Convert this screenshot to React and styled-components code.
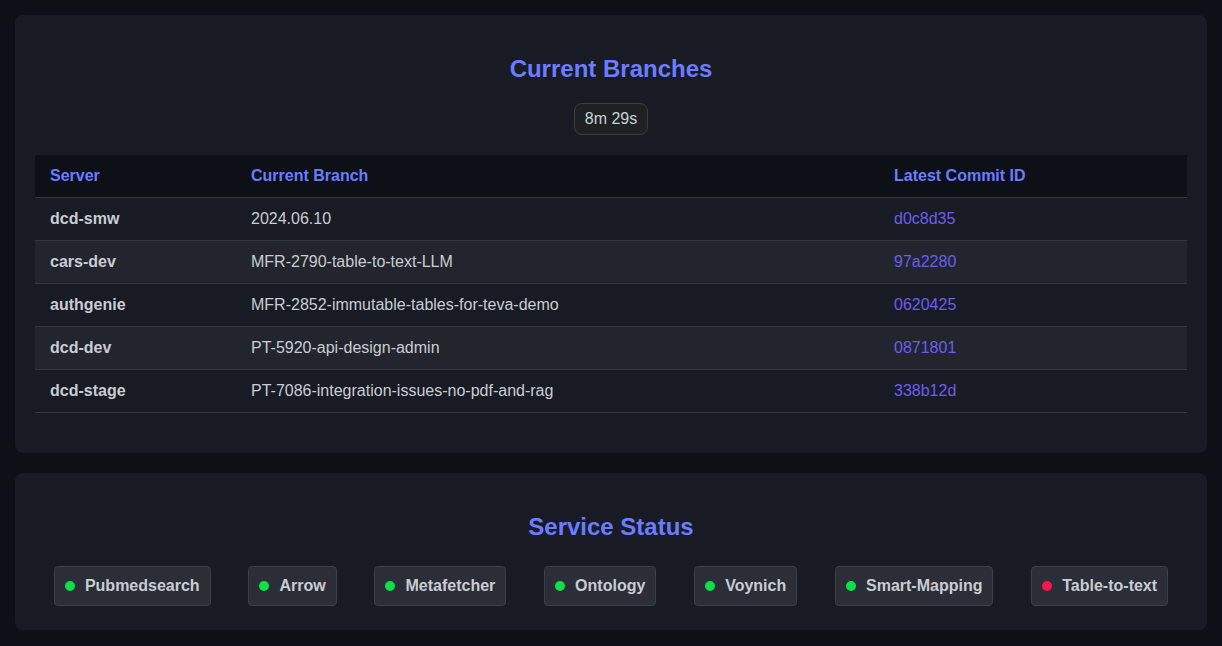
import styled, { createGlobalStyle } from 'styled-components';

const GlobalStyle = createGlobalStyle`
  body {
    margin: 0;
    background: #0d1017;
    font-family: 'Liberation Sans', Arial, sans-serif;
    color: #c9d1d9;
  }
`;

const Page = styled.div`
  padding: 15px;
  display: flex;
  flex-direction: column;
  gap: 20px;
`;

const Card = styled.section`
  background: #181b23;
  border-radius: 8px;
  padding: ${(p) => p.$pad || '20px'};
`;

const Title = styled.h2`
  margin: 20px 0 0;
  text-align: center;
  font-size: 24px;
  line-height: 28px;
  font-weight: 700;
  color: #6b7cff;
`;

const TimerRow = styled.div`
  display: flex;
  justify-content: center;
  margin: 20px 0 20px;
`;

const Timer = styled.span`
  display: inline-block;
  padding: 6px 10px;
  font-size: 16px;
  line-height: 18px;
  color: #c9d1d9;
  background: #1f2024;
  border: 1px solid #3b3c40;
  border-radius: 8px;
`;

const Table = styled.table`
  width: 100%;
  border-collapse: collapse;
  font-size: 16px;
  margin-bottom: 20px;
`;

const Th = styled.th`
  text-align: left;
  padding: 0 15px;
  height: 42px;
  background: #0d1017;
  color: #6b7cff;
  font-weight: 700;
  border-bottom: 1px solid #33363e;
  width: ${(p) => p.$w || 'auto'};
`;

const Tr = styled.tr`
  background: ${(p) => (p.$odd ? '#22252d' : 'transparent')};
`;

const Td = styled.td`
  padding: 0 15px;
  height: 42px;
  border-bottom: 1px solid #33363e;
  color: ${(p) => (p.$commit ? '#6c5cf2' : '#c9ccd3')};
  font-weight: ${(p) => (p.$bold ? 700 : 400)};
`;

const Services = styled.div`
  display: flex;
  justify-content: space-around;
  margin-top: 25px;
`;

const Pill = styled.div`
  display: flex;
  align-items: center;
  gap: 10px;
  padding: 10px 10px;
  background: #2b2e37;
  border: 1px solid #3c3f49;
  border-radius: 4px;
  font-size: 16px;
  line-height: 18px;
  font-weight: 700;
  color: #c9ccd3;
`;

const Dot = styled.span`
  width: 10px;
  height: 10px;
  border-radius: 50%;
  background: ${(p) => (p.$up ? '#0fe04a' : '#f5154f')};
`;

const branches = [
  ['dcd-smw', '2024.06.10', 'd0c8d35'],
  ['cars-dev', 'MFR-2790-table-to-text-LLM', '97a2280'],
  ['authgenie', 'MFR-2852-immutable-tables-for-teva-demo', '0620425'],
  ['dcd-dev', 'PT-5920-api-design-admin', '0871801'],
  ['dcd-stage', 'PT-7086-integration-issues-no-pdf-and-rag', '338b12d'],
];

const services = [
  ['Pubmedsearch', true],
  ['Arrow', true],
  ['Metafetcher', true],
  ['Ontology', true],
  ['Voynich', true],
  ['Smart-Mapping', true],
  ['Table-to-text', false],
];

export default function App() {
  return (
    <Page>
      <GlobalStyle />
      <Card>
        <Title>Current Branches</Title>
        <TimerRow>
          <Timer>8m 29s</Timer>
        </TimerRow>
        <Table>
          <thead>
            <tr>
              <Th $w="171px">Server</Th>
              <Th $w="613px">Current Branch</Th>
              <Th>Latest Commit ID</Th>
            </tr>
          </thead>
          <tbody>
            {branches.map(([server, branch, commit], i) => (
              <Tr key={server} $odd={i % 2 === 1}>
                <Td $bold>{server}</Td>
                <Td>{branch}</Td>
                <Td $commit>{commit}</Td>
              </Tr>
            ))}
          </tbody>
        </Table>
      </Card>
      <Card $pad="20px 20px 24px">
        <Title>Service Status</Title>
        <Services>
          {services.map(([name, up]) => (
            <Pill key={name}>
              <Dot $up={up} />
              {name}
            </Pill>
          ))}
        </Services>
      </Card>
    </Page>
  );
}
